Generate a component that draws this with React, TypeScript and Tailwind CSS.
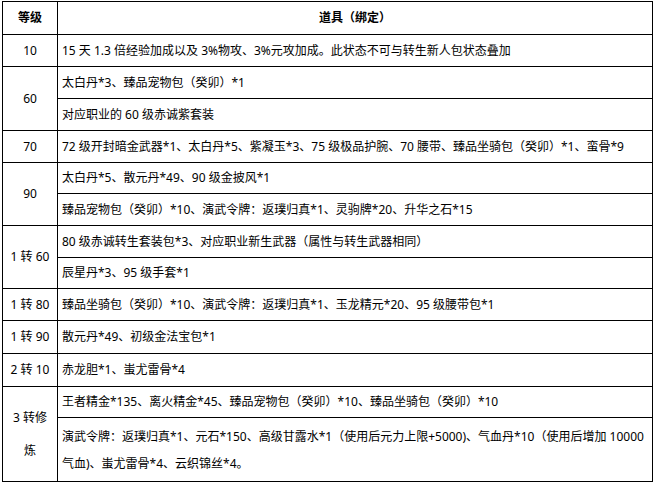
const font = { fontFamily: '"Noto Sans", "Noto Sans CJK SC", sans-serif' };

type Row = { level?: string; levelSpan?: number; levelNode?: React.ReactNode; items: React.ReactNode; h: string };

const rows: Row[] = [
  { level: '10', items: '15 天 1.3 倍经验加成以及 3%物攻、3%元攻加成。此状态不可与转生新人包状态叠加', h: 'h-[32px]' },
  { level: '60', levelSpan: 2, items: '太白丹*3、臻品宠物包（癸卯）*1', h: 'h-[32px]' },
  { items: '对应职业的 60 级赤诚紫套装', h: 'h-[32px]' },
  { level: '70', items: '72 级开封暗金武器*1、太白丹*5、紫凝玉*3、75 级极品护腕、70 腰带、臻品坐骑包（癸卯）*1、蛮骨*9', h: 'h-[32px]' },
  { level: '90', levelSpan: 2, items: '太白丹*5、散元丹*49、90 级金披风*1', h: 'h-[31px]' },
  { items: '臻品宠物包（癸卯）*10、演武令牌：返璞归真*1、灵驹牌*20、升华之石*15', h: 'h-[32px]' },
  { level: '1 转 60', levelSpan: 2, items: '80 级赤诚转生套装包*3、对应职业新生武器（属性与转生武器相同）', h: 'h-[32px]' },
  { items: '辰星丹*3、95 级手套*1', h: 'h-[31px]' },
  { level: '1 转 80', items: '臻品坐骑包（癸卯）*10、演武令牌：返璞归真*1、玉龙精元*20、95 级腰带包*1', h: 'h-[32px]' },
  { level: '1 转 90', items: '散元丹*49、初级金法宝包*1', h: 'h-[33px]' },
  { level: '2 转 10', items: '赤龙胆*1、蚩尤雷骨*4', h: 'h-[33px]' },
  {
    levelNode: (
      <span className="block leading-[33px]">
        3 转修
        <br />
        炼
      </span>
    ),
    levelSpan: 2,
    items: '王者精金*135、离火精金*45、臻品宠物包（癸卯）*10、臻品坐骑包（癸卯）*10',
    h: 'h-[31px]',
  },
  {
    items: (
      <span className="block leading-[27px]">
        演武令牌：返璞归真*1、元石*150、高级甘露水*1（使用后元力上限+5000)、气血丹*10（使用后增加 10000
        <br />
        气血)、蚩尤雷骨*4、云织锦丝*4。
      </span>
    ),
    h: 'h-[64px]',
  },
];

export default function App() {
  return (
    <div className="bg-white w-[657px] h-[483px] pl-[2px] pt-[1px] text-black" style={font}>
      <table className="table-fixed border-collapse w-[651px] text-[12px]">
        <colgroup>
          <col className="w-[55px]" />
          <col />
        </colgroup>
        <tbody>
          <tr className="h-[33px]">
            <th className="border border-black font-bold text-center p-0">等级</th>
            <th className="border border-black font-bold text-center p-0">道具（绑定）</th>
          </tr>
          {rows.map((r, i) => (
            <tr key={i} className={r.h}>
              {(r.level || r.levelNode) && (
                <td rowSpan={r.levelSpan ?? 1} className="border border-black text-center align-middle p-0">
                  {r.levelNode ?? r.level}
                </td>
              )}
              <td className="border border-black align-middle pl-[4px] pr-1 py-0 whitespace-nowrap">{r.items}</td>
            </tr>
          ))}
        </tbody>
      </table>
    </div>
  );
}
